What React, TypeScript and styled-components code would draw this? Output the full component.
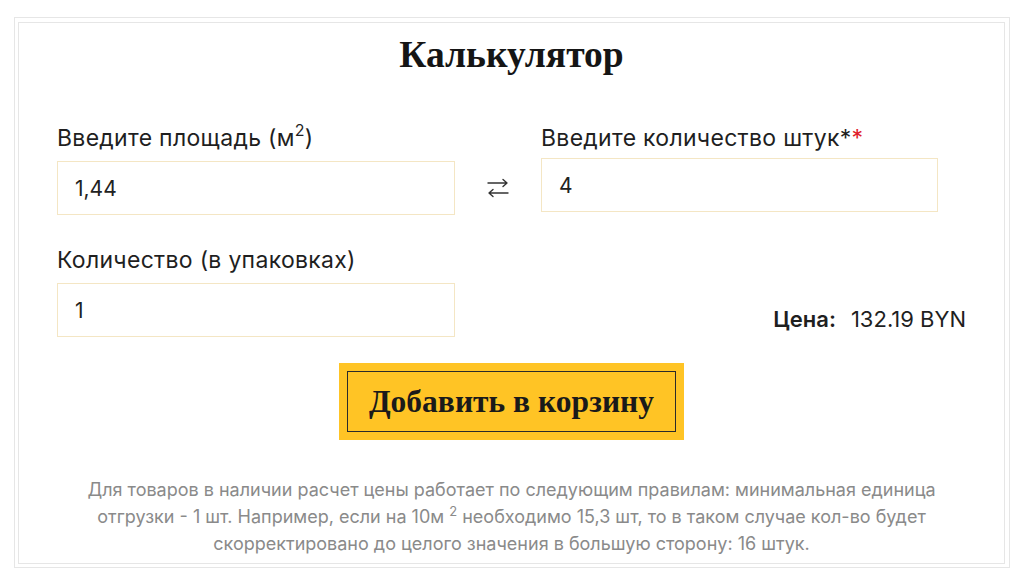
import React from "react";
import styled, { createGlobalStyle } from "styled-components";

const Global = createGlobalStyle`
  html, body { margin: 0; padding: 0; background: #fff; }
  body { font-family: Inter, "Noto Sans", sans-serif; color: #1f1f1f; }
  * { box-sizing: border-box; }
`;

const Outer = styled.div`
  margin: 17px 0 0 14px;
  width: 996px;
  height: 551px;
  border: 1px solid #e6e6e6;
  padding: 4px 4px 3px 3px;
`;

const Inner = styled.div`
  height: 100%;
  border: 1px solid #e6e6e6;
  padding: 10px 38px 0 38px;
  display: flex;
  flex-direction: column;
`;

const Title = styled.h2`
  margin: 0;
  font-family: "Liberation Serif", "DejaVu Serif", serif;
  font-weight: 700;
  font-size: 37.5px;
  line-height: 44px;
  text-align: center;
  color: #151515;
`;

const Row = styled.div<{ $top: number; $align?: string }>`
  display: flex;
  align-items: ${(p) => p.$align || "flex-start"};
  margin-top: ${(p) => p.$top}px;
`;

const Field = styled.div<{ $w: number }>`
  width: ${(p) => p.$w}px;
  display: flex;
  flex-direction: column;
`;

const Label = styled.label<{ $gap: number }>`
  font-size: 23px;
  letter-spacing: 0.3px;
  line-height: 30px;
  color: #1f1f1f;
  white-space: nowrap;
  margin-bottom: ${(p) => p.$gap}px;
  sup {
    font-size: 16px;
    line-height: 0;
    vertical-align: 10px;
  }
`;

const Req = styled.span`
  color: #e0202b;
`;

const Input = styled.input`
  height: 54px;
  width: 100%;
  border: 1px solid #f4e6c4;
  background: #fff;
  padding: 0 17px;
  font-family: Inter, "Noto Sans", sans-serif;
  font-size: 21px;
  color: #222;
  outline: none;
`;

const Swap = styled.div`
  width: 86px;
  height: 54px;
  margin-top: 38px;
  display: flex;
  align-items: center;
  justify-content: center;
  color: #333;
`;

const Price = styled.div`
  flex: 1;
  display: flex;
  justify-content: flex-end;
  gap: 15px;
  font-size: 22px;
  line-height: 26px;
  margin-bottom: 5px;
  color: #1f1f1f;
`;

const PriceLabel = styled.span`
  font-weight: 600;
`;

const ButtonWrap = styled.div`
  display: flex;
  justify-content: center;
  margin-top: 26px;
`;

const CartButton = styled.button`
  width: 345px;
  height: 77px;
  background: #ffc425;
  border: none;
  padding: 8px;
  cursor: pointer;
  display: flex;
`;

const ButtonFrame = styled.span`
  flex: 1;
  border: 1px solid #2a2a2a;
  display: flex;
  align-items: center;
  justify-content: center;
  font-family: "Liberation Serif", "DejaVu Serif", serif;
  font-weight: 700;
  font-size: 31.5px;
  color: #1a1a1a;
`;

const Note = styled.p`
  margin: 36px 0 0;
  text-align: center;
  font-size: 18px;
  line-height: 27px;
  color: #8a8a8a;
  sup {
    font-size: 13px;
    line-height: 0;
    vertical-align: 7px;
  }
`;

const SwapIcon = () => (
  <svg width="24" height="20" viewBox="0 0 24 20" fill="none" stroke="#333" strokeWidth="1.4" strokeLinecap="round" strokeLinejoin="round">
    <path d="M2 5h19M17 1.5L21 5l-4 3.5" />
    <path d="M22 15H3M7 11.5L3 15l4 3.5" />
  </svg>
);

export default function App() {
  return (
    <>
      <Global />
      <Outer>
        <Inner>
          <Title>Калькулятор</Title>
          <Row $top={46}>
            <Field $w={398}>
              <Label $gap={8}>
                Введите площадь (м<sup>2</sup>)
              </Label>
              <Input defaultValue="1,44" />
            </Field>
            <Swap>
              <SwapIcon />
            </Swap>
            <Field $w={397}>
              <Label $gap={5}>
                Введите количество штук*<Req>*</Req>
              </Label>
              <Input defaultValue="4" />
            </Field>
          </Row>
          <Row $top={30} $align="flex-end">
            <Field $w={398}>
              <Label $gap={8}>Количество (в упаковках)</Label>
              <Input defaultValue="1" />
            </Field>
            <Price>
              <PriceLabel>Цена:</PriceLabel>
              <span>132.19 BYN</span>
            </Price>
          </Row>
          <ButtonWrap>
            <CartButton>
              <ButtonFrame>Добавить в корзину</ButtonFrame>
            </CartButton>
          </ButtonWrap>
          <Note>
            Для товаров в наличии расчет цены работает по следующим правилам: минимальная единица
            <br />
            отгрузки - 1 шт. Например, если на 10м <sup>2</sup> необходимо 15,3 шт, то в таком случае кол-во будет
            <br />
            скорректировано до целого значения в большую сторону: 16 штук.
          </Note>
        </Inner>
      </Outer>
    </>
  );
}
